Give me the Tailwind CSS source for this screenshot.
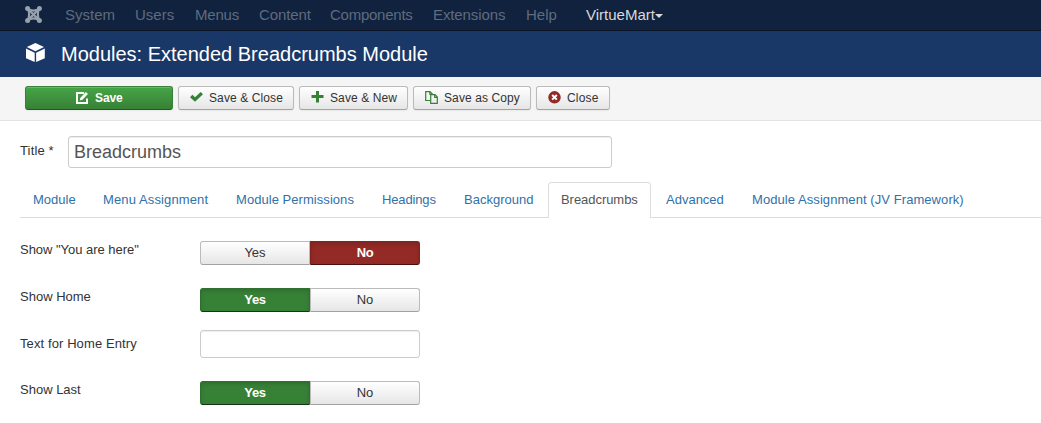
<!DOCTYPE html>
<html lang="en">
<head>
<meta charset="utf-8">
<title>Modules: Extended Breadcrumbs Module</title>
<script src="https://cdn.jsdelivr.net/npm/@tailwindcss/browser@4"></script>
</head>
<body class="w-[1041px] h-[423px] overflow-hidden bg-white font-['Liberation_Sans',Arial,sans-serif] text-[13px] leading-[18px] text-[#333]">
<nav class="h-[31px] bg-[#10223e] border-b border-[#0b1526] flex pl-[25px] text-[15px] leading-[30px] text-[#5f6b7e] whitespace-nowrap">
  <span class="w-10 pt-[6px]"><svg class="block" width="17" height="17" viewBox="0 0 17 17" fill="none" stroke="#97a0ad"><g stroke-width="2.3"><path d="M2.6 2.8Q8.5 6.4 14.4 2.8"/><path d="M2.6 14.2Q8.5 10.6 14.4 14.2"/><path d="M2.8 2.6Q5.6 8.5 2.8 14.4"/><path d="M14.2 2.6Q11.4 8.5 14.2 14.4"/><path d="M4 4L13 13M13 4L4 13" stroke-width="2.4"/></g><g fill="#97a0ad" stroke="none"><circle cx="2.6" cy="2.6" r="2.5"/><circle cx="14.4" cy="2.6" r="2.5"/><circle cx="2.6" cy="14.4" r="2.5"/><circle cx="14.4" cy="14.4" r="2.5"/></g></svg></span>
  <span class="w-[70px]">System</span>
  <span class="w-[60px]">Users</span>
  <span class="w-16 tracking-[-0.2px]">Menus</span>
  <span class="w-[71px] tracking-[-0.1px]">Content</span>
  <span class="w-[103px] tracking-[-0.25px]">Components</span>
  <span class="w-[93px] tracking-[-0.1px]">Extensions</span>
  <span class="w-[60px]">Help</span>
  <span class="flex text-[#d9d9d9]">VirtueMart<svg class="mt-[14px]" width="8" height="4" viewBox="0 0 8 4"><path d="M0 0H8L4 4Z" fill="#d9d9d9"/></svg></span>
</nav>
<header class="h-[46px] bg-[#1a3867] flex pl-[25px] text-white">
  <svg class="mt-3 w-5 h-5 mr-4" viewBox="0 0 20 20" fill="#fff"><path d="M10.4 0L19 4.1L10.4 8.2L1.8 4.1Z"/><path d="M1 5.6L9.7 9.7V19L1 15.2Z"/><path d="M19.8 5.6L11.1 9.7V19L19.8 15.2Z"/></svg>
  <h1 class="text-[20px] leading-[46px] whitespace-nowrap">Modules: Extended Breadcrumbs Module</h1>
</header>
<div class="h-11 bg-[#f5f5f5] border-b border-[#e3e3e3] flex gap-[5px] pl-[25px] pt-[9px] text-[12px] leading-[22px] whitespace-nowrap">
  <button class="flex w-[148px] h-6 pl-[50px] rounded-[3px] border border-[#378137] border-b-[#245624] bg-linear-to-b from-[#46a546] to-[#378137] text-white font-bold shadow-[inset_0_1px_0_rgba(255,255,255,0.2),0_1px_2px_rgba(0,0,0,0.05)]"><svg class="mt-[4px] mr-[6px] w-[13px] h-[13px]" viewBox="0 0 13 13" fill="none" stroke="#fff" stroke-width="2"><path d="M8 2H1V12H11V7.5"/><path d="M5 8.2L10.9 2" stroke-width="2.8"/><path d="M3.7 9.4L4.3 6.9L6.2 8.8Z" fill="#fff" stroke="none"/></svg><span class="tracking-[-0.1px]">Save</span></button>
  <button class="flex w-[116px] h-6 pl-[11px] rounded-[3px] border border-[#bbb] border-b-[#a2a2a2] bg-linear-to-b from-white to-[#e6e6e6] shadow-[0_1px_2px_rgba(0,0,0,0.05)]"><svg class="mt-[4px] mr-[6px] w-[13px] h-[12px]" viewBox="0 0 13 12"><path d="M0 6.2L2.4 3.8L5 6.3L10.7 1L13 3.2L5 10.8Z" fill="#378137"/></svg><span class="tracking-[0.1px]">Save &amp; Close</span></button>
  <button class="flex w-[109px] h-6 pl-[11px] rounded-[3px] border border-[#bbb] border-b-[#a2a2a2] bg-linear-to-b from-white to-[#e6e6e6] shadow-[0_1px_2px_rgba(0,0,0,0.05)]"><svg class="mt-[3px] mr-[6px] w-[13px] h-[13px]" viewBox="0 0 13 13"><path d="M5 1H8V5H12.5V8H8V12.5H5V8H.5V5H5Z" fill="#378137"/></svg><span class="tracking-[0.1px]">Save &amp; New</span></button>
  <button class="flex w-[118px] h-6 pl-[11px] rounded-[3px] border border-[#bbb] border-b-[#a2a2a2] bg-linear-to-b from-white to-[#e6e6e6] shadow-[0_1px_2px_rgba(0,0,0,0.05)]"><svg class="mt-[4px] mr-[6px] w-[13px] h-[13px]" viewBox="0 0 13 13" fill="none" stroke="#378137" stroke-width="1.2"><path d="M5 9.5H.7V.7H5L7.3 3V4"/><path d="M4.8 .7V3.2H7.3"/><path d="M5.7 3.7H10L12.3 6V12.3H5.7Z"/><path d="M9.7 3.7V6.3H12.3"/></svg><span class="tracking-[0.1px]">Save as Copy</span></button>
  <button class="flex w-[74px] h-6 pl-[11px] rounded-[3px] border border-[#bbb] border-b-[#a2a2a2] bg-linear-to-b from-white to-[#e6e6e6] shadow-[0_1px_2px_rgba(0,0,0,0.05)]"><svg class="mt-[4px] mr-[6px] w-[13px] h-[13px]" viewBox="0 0 13 13"><circle cx="6.5" cy="6.3" r="6.2" fill="#942a25"/><path d="M4.2 4L8.8 8.6M8.8 4L4.2 8.6" stroke="#fff" stroke-width="2"/></svg><span class="tracking-[0.2px]">Close</span></button>
</div>
<main class="px-5 pt-[15px]">
  <div class="flex">
    <label class="w-12 pt-[6px] tracking-[0.15px]">Title *</label>
    <div class="w-[544px] h-8 border border-[#ccc] rounded-[3px] pl-[5px] text-[18px] leading-[30px] text-[#555] shadow-[inset_0_1px_1px_rgba(0,0,0,0.075)]">Breadcrumbs</div>
  </div>
  <div class="mt-[14px] -mr-5 h-9 flex border-b border-[#ddd] leading-[36px] text-[#3071a9] whitespace-nowrap">
    <span class="w-[70px] pl-[13px]">Module</span>
    <span class="w-[133px] pl-[13px] tracking-[0.12px]">Menu Assignment</span>
    <span class="w-[146px] pl-[13px] tracking-[0.05px]">Module Permissions</span>
    <span class="w-[82px] pl-[13px] tracking-[-0.15px]">Headings</span>
    <span class="w-[97px] pl-[13px]">Background</span>
    <span class="w-[103px] h-9 pl-3 border border-b-0 border-[#ddd] rounded-t-[4px] bg-white text-[#555] leading-[34px] tracking-[-0.05px]">Breadcrumbs</span>
    <span class="w-[88px] pl-[15px]">Advanced</span>
    <span class="pl-[13px] tracking-[0.07px]">Module Assignment (JV Framework)</span>
  </div>
  <div class="flex mt-[23px] h-[47px]">
    <label class="w-[180px] tracking-[-0.03px]">Show "You are here"</label>
    <div class="flex w-[220px] h-6 leading-[22px] text-center">
      <span class="w-[110px] h-6 rounded-l-[3px] border border-[#bbb] border-b-[#a2a2a2] bg-linear-to-b from-white to-[#e6e6e6]">Yes</span>
      <span class="w-[110px] h-6 rounded-r-[3px] border border-[#802420] border-b-[#48100e] bg-[#942a25] text-white font-bold tracking-[-0.3px] shadow-[inset_0_2px_4px_rgba(0,0,0,0.15)]">No</span>
    </div>
  </div>
  <div class="flex h-[42px]">
    <label class="w-[180px]">Show Home</label>
    <div class="flex w-[220px] h-6 leading-[22px] text-center">
      <span class="w-[110px] h-6 rounded-l-[3px] border border-[#2f6f2f] border-b-[#153415] bg-[#378137] text-white font-bold tracking-[-0.3px] shadow-[inset_0_2px_4px_rgba(0,0,0,0.15)]">Yes</span>
      <span class="w-[110px] h-6 rounded-r-[3px] border border-[#bbb] border-b-[#a2a2a2] bg-linear-to-b from-white to-[#e6e6e6]">No</span>
    </div>
  </div>
  <div class="flex h-[51px]">
    <label class="w-[180px] pt-[5px] tracking-[0.1px]">Text for Home Entry</label>
    <div class="w-[220px] h-7 border border-[#ccc] rounded-[3px] shadow-[inset_0_1px_1px_rgba(0,0,0,0.075)]"></div>
  </div>
  <div class="flex">
    <label class="w-[180px]">Show Last</label>
    <div class="flex w-[220px] h-6 leading-[22px] text-center">
      <span class="w-[110px] h-6 rounded-l-[3px] border border-[#2f6f2f] border-b-[#153415] bg-[#378137] text-white font-bold tracking-[-0.3px] shadow-[inset_0_2px_4px_rgba(0,0,0,0.15)]">Yes</span>
      <span class="w-[110px] h-6 rounded-r-[3px] border border-[#bbb] border-b-[#a2a2a2] bg-linear-to-b from-white to-[#e6e6e6]">No</span>
    </div>
  </div>
</main>
</body>
</html>
